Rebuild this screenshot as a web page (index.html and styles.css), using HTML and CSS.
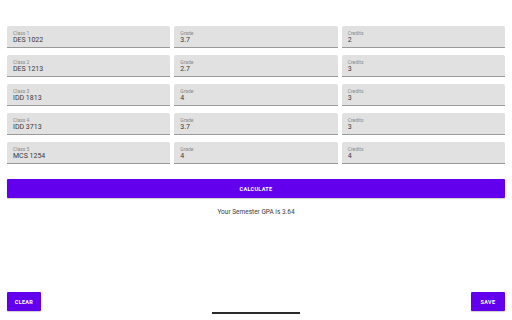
FILE: index.html
```html
<!DOCTYPE html>
<html>
<head>
<meta charset="utf-8">
<link rel="stylesheet" href="styles.css">
</head>
<body>
<div class="page">
  <div class="grid">
    <div class="field"><span class="label">Class 1</span><span class="value">DES 1022</span></div>
    <div class="field"><span class="label">Grade</span><span class="value">3.7</span></div>
    <div class="field"><span class="label">Credits</span><span class="value">2</span></div>
    <div class="field"><span class="label">Class 2</span><span class="value">DES 1213</span></div>
    <div class="field"><span class="label">Grade</span><span class="value">2.7</span></div>
    <div class="field"><span class="label">Credits</span><span class="value">3</span></div>
    <div class="field"><span class="label">Class 3</span><span class="value">IDD 1813</span></div>
    <div class="field"><span class="label">Grade</span><span class="value">4</span></div>
    <div class="field"><span class="label">Credits</span><span class="value">3</span></div>
    <div class="field"><span class="label">Class 4</span><span class="value">IDD 3713</span></div>
    <div class="field"><span class="label">Grade</span><span class="value">3.7</span></div>
    <div class="field"><span class="label">Credits</span><span class="value">3</span></div>
    <div class="field"><span class="label">Class 5</span><span class="value">MCS 1254</span></div>
    <div class="field"><span class="label">Grade</span><span class="value">4</span></div>
    <div class="field"><span class="label">Credits</span><span class="value">4</span></div>
  </div>
  <button class="btn calc">CALCULATE</button>
  <div class="result">Your Semester GPA is 3.64</div>
  <div class="footer">
    <button class="btn small">CLEAR</button>
    <button class="btn small">SAVE</button>
  </div>
</div>
<div class="home"></div>
</body>
</html>
```
FILE: styles.css
```css
html, body {
  margin: 0;
  padding: 0;
  background: #fff;
  font-family: Roboto, "Liberation Sans", sans-serif;
}
.page {
  height: 320px;
  box-sizing: border-box;
  padding: 26px 7px 9px 7px;
  display: flex;
  flex-direction: column;
}
.grid {
  display: grid;
  grid-template-columns: 1fr 1fr 1fr;
  column-gap: 4px;
  row-gap: 7px;
}
.field {
  height: 22px;
  box-sizing: border-box;
  background: #e1e1e1;
  border-bottom: 1px solid #9a9a9a;
  border-radius: 2px 2px 0 0;
  padding: 4px 6px 0 6px;
  display: flex;
  flex-direction: column;
}
.label {
  font-size: 5px;
  line-height: 6px;
  color: #8a8a8a;
}
.value {
  font-size: 7px;
  line-height: 9px;
  color: #3a3a3a;
}
.btn {
  border: none;
  background: #6200ee;
  color: #fff;
  font-family: Roboto, "Liberation Sans", sans-serif;
  font-weight: bold;
  font-size: 5.5px;
  letter-spacing: 0.3px;
  border-radius: 1px;
  box-shadow: 0 1px 1px rgba(0,0,0,0.2);
  padding: 0;
}
.calc {
  margin-top: 15px;
  height: 19px;
  width: 100%;
}
.result {
  margin-top: 10px;
  text-align: center;
  font-size: 6.5px;
  color: #3a3a3a;
}
.footer {
  margin-top: auto;
  display: flex;
  justify-content: space-between;
}
.small {
  width: 34px;
  height: 19px;
}
.home {
  position: absolute;
  left: 212px;
  top: 312px;
  width: 88px;
  height: 2px;
  background: #2a2a2a;
}
```
